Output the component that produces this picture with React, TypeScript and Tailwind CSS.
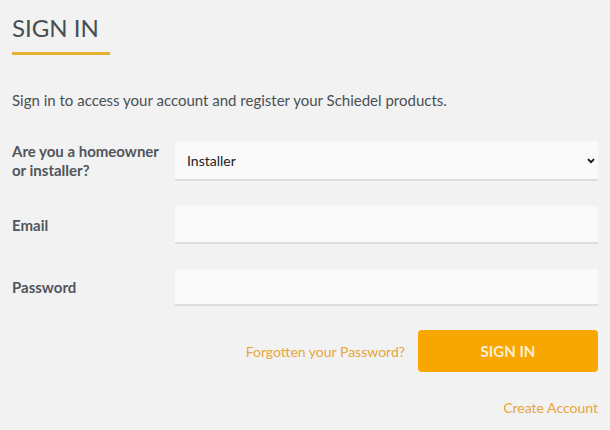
export default function App() {
  return (
    <div className="min-h-screen w-[610px] h-[430px] bg-[#f2f2f2] font-['Lato','Noto_Sans',sans-serif] text-[#4a4f54] overflow-hidden">
      <div className="pl-3 pr-3 pt-[13px]">
        <h1 className="text-[24px] leading-[30px] text-[#474d52]">SIGN IN</h1>
        <div className="mt-[9px] w-[98px] h-[3px] bg-[#e8b132]"></div>

        <p className="mt-[35px] text-[15px] leading-5 text-[#4a4f54]">
          Sign in to access your account and register your Schiedel products.
        </p>

        <form className="mt-[31px] flex flex-col">
          <div className="flex items-center h-10">
            <div className="w-[163px]">
              <label className="block w-[150px] text-[15px] leading-[19px] font-bold text-[#50565b]">
                Are you a homeowner or installer?
              </label>
            </div>
            <div className="relative flex-1 h-10 bg-[#f9f9f9] border-b-2 border-[#dedede]">
              <select
                defaultValue="Installer"
                className="w-full h-full appearance-none bg-transparent pl-3 text-[14px] text-[#222] outline-none"
              >
                <option>Homeowner</option>
                <option>Installer</option>
              </select>
              <svg
                className="pointer-events-none absolute right-[3px] top-[17px]"
                width="8"
                height="6"
                viewBox="0 0 8 6"
              >
                <path d="M1 1.2 L4 4.2 L7 1.2" fill="none" stroke="#111" strokeWidth="1.8" />
              </svg>
            </div>
          </div>

          <div className="flex items-center h-[38px] mt-[25px]">
            <label className="w-[163px] text-[15px] font-bold text-[#50565b]">Email</label>
            <input
              type="email"
              className="flex-1 h-[38px] bg-[#f9f9f9] border-b-2 border-[#dedede] px-3 text-[14px] outline-none"
            />
          </div>

          <div className="flex items-center h-[37px] mt-[25px]">
            <label className="w-[163px] text-[15px] font-bold text-[#50565b]">Password</label>
            <input
              type="password"
              className="flex-1 h-[37px] bg-[#f9f9f9] border-b-2 border-[#dedede] px-3 text-[14px] outline-none"
            />
          </div>

          <div className="flex items-center justify-end mt-[24px] gap-[13px]">
            <a className="text-[14px] text-[#e6a63a] cursor-pointer">Forgotten your Password?</a>
            <button
              type="button"
              className="w-[180px] h-[42px] rounded-[4px] bg-[#f8a700] text-[15px] font-bold text-[#fbeed6]"
            >
              SIGN IN
            </button>
          </div>

          <div className="flex justify-end mt-[25px]">
            <a className="text-[14px] text-[#e6a63a] cursor-pointer">Create Account</a>
          </div>
        </form>
      </div>
    </div>
  );
}
